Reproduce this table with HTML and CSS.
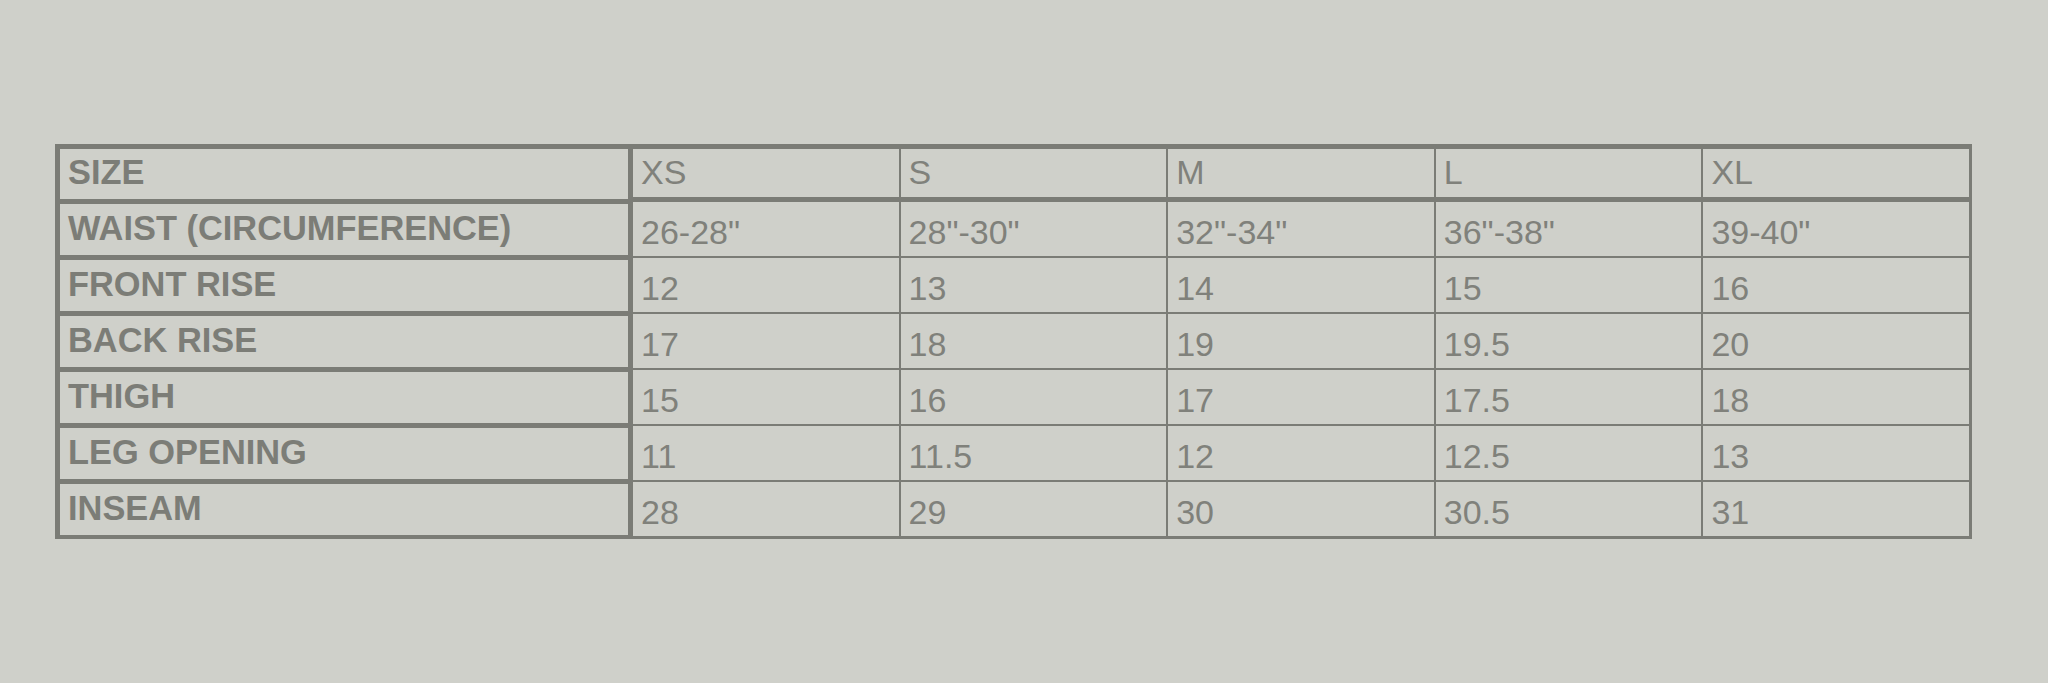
FILE: index.html
```html
<!DOCTYPE html>
<html>
<head>
<meta charset="utf-8">
<link rel="stylesheet" href="styles.css">
</head>
<body>
<div class="page">
  <table class="sizes">
    <tr class="head">
      <th class="label">SIZE</th>
      <td>XS</td><td>S</td><td>M</td><td>L</td><td>XL</td>
    </tr>
    <tr>
      <th class="label">WAIST (CIRCUMFERENCE)</th>
      <td>26-28"</td><td>28"-30"</td><td>32"-34"</td><td>36"-38"</td><td>39-40"</td>
    </tr>
    <tr>
      <th class="label">FRONT RISE</th>
      <td>12</td><td>13</td><td>14</td><td>15</td><td>16</td>
    </tr>
    <tr>
      <th class="label">BACK RISE</th>
      <td>17</td><td>18</td><td>19</td><td>19.5</td><td>20</td>
    </tr>
    <tr>
      <th class="label">THIGH</th>
      <td>15</td><td>16</td><td>17</td><td>17.5</td><td>18</td>
    </tr>
    <tr>
      <th class="label">LEG OPENING</th>
      <td>11</td><td>11.5</td><td>12</td><td>12.5</td><td>13</td>
    </tr>
    <tr>
      <th class="label">INSEAM</th>
      <td>28</td><td>29</td><td>30</td><td>30.5</td><td>31</td>
    </tr>
  </table>
</div>
</body>
</html>
```

FILE: styles.css
```css
html, body {
  margin: 0;
  padding: 0;
  background: #cfd0ca;
}

.page {
  padding: 144px 0 0 55px;
  width: 2048px;
  height: 683px;
  box-sizing: border-box;
}

.sizes {
  border-collapse: separate;
  border-spacing: 0;
  border: 2px solid #7b7c76;
  table-layout: fixed;
  width: 1917px;
  font-family: "Liberation Sans", Arial, sans-serif;
  font-size: 34px;
  line-height: 38px;
  color: #80817b;
}

.sizes tr {
  height: 56px;
}

.sizes tr.head {
  height: 55px;
}

.sizes th,
.sizes td {
  box-sizing: border-box;
  vertical-align: top;
  text-align: left;
  white-space: nowrap;
  padding: 0;
}

.sizes th.label {
  width: 575px;
  font-size: 34.4px;
  font-weight: bold;
  color: #7c7d77;
  border-style: solid;
  border-color: #7b7c76;
  border-width: 3px 4px 2px 3px;
  padding: 5px 0 0 8px;
}

.sizes td {
  font-weight: normal;
  border: 1px solid #7b7c76;
  padding: 11px 0 0 8px;
}

.sizes tr.head td {
  border-top-width: 3px;
  border-bottom-width: 4px;
  padding-top: 4px;
}

.sizes tr.head th.label {
  padding-top: 4px;
}
```
